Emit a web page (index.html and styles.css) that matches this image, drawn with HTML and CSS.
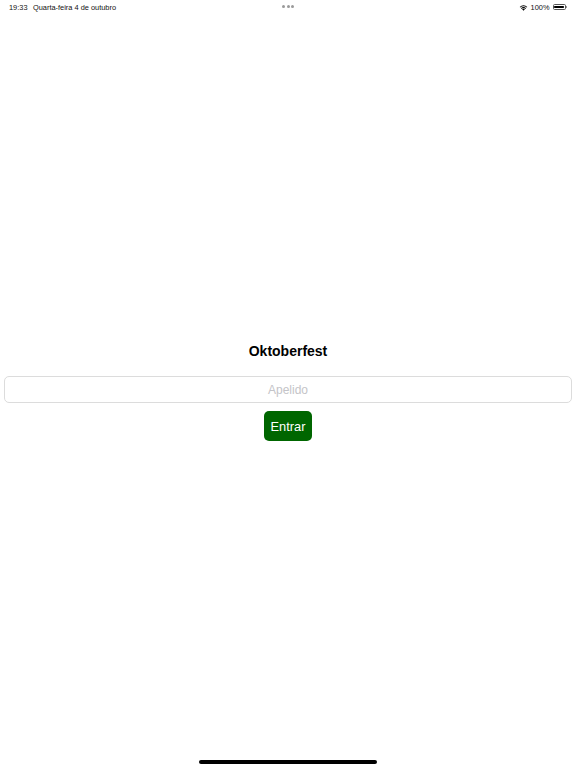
FILE: index.html
```
<!DOCTYPE html>
<html lang="pt">
<head>
<meta charset="utf-8">
<title>Oktoberfest</title>
<link rel="stylesheet" href="styles.css">
</head>
<body>
<div class="page">
  <header class="statusbar">
    <div class="sb-left">
      <span class="time">19:33</span>
      <span class="date">Quarta-feira 4 de outubro</span>
    </div>
    <div class="sb-center">
      <span class="dot"></span><span class="dot"></span><span class="dot"></span>
    </div>
    <div class="sb-right">
      <svg class="wifi" width="9" height="7" viewBox="0 0 18 14">
        <path d="M9 13.5 L6.2 10.6 A4 4 0 0 1 11.8 10.6 Z" fill="#000"/>
        <path d="M3.9 8.3 A7.3 7.3 0 0 1 14.1 8.3 L12.6 9.8 A5.2 5.2 0 0 0 5.4 9.8 Z" fill="#000"/>
        <path d="M1.4 5.8 A10.8 10.8 0 0 1 16.6 5.8 L15.2 7.2 A8.8 8.8 0 0 0 2.8 7.2 Z" fill="#000"/>
      </svg>
      <span class="pct">100%</span>
      <span class="battery"><span class="battery-fill"></span></span><span class="battery-nub"></span>
    </div>
  </header>
  <main class="main">
    <h1 class="title">Oktoberfest</h1>
    <input class="field" type="text" placeholder="Apelido">
    <button class="btn" type="button">Entrar</button>
  </main>
  <footer class="homebar-wrap"><span class="homebar"></span></footer>
</div>
</body>
</html>
```
FILE: styles.css
```
* { box-sizing: border-box; }
html, body { margin: 0; padding: 0; background: #fff; }
body { font-family: "Liberation Sans", Arial, sans-serif; color: #000; }

.page {
  width: 576px;
  height: 768px;
  display: flex;
  flex-direction: column;
  overflow: hidden;
}

.statusbar {
  height: 14px;
  display: flex;
  align-items: center;
  justify-content: space-between;
  padding: 0 9px 0 9px;
  font-size: 7.4px;
  color: #111;
  position: relative;
}
.sb-left { display: flex; gap: 5.5px; align-items: center; }
.time, .date, .pct { color: #111; }
.sb-center {
  position: absolute;
  left: 282px;
  top: 5px;
  display: flex;
  gap: 1.5px;
}
.dot { width: 3px; height: 3px; border-radius: 50%; background: #9a9a9a; display: block; }
.sb-right { display: flex; align-items: center; }
.wifi { margin-right: 3px; }
.pct { margin-right: 3px; }
.battery {
  width: 13px;
  height: 6px;
  border: 0.8px solid #555;
  border-radius: 1.6px;
  padding: 0.7px;
  display: flex;
}
.battery-fill { flex: 1; background: #000; border-radius: 0.8px; }
.battery-nub { width: 1px; height: 2.5px; background: #777; border-radius: 0 1px 1px 0; margin-left: 0.5px; }

.main {
  flex: 1;
  display: flex;
  flex-direction: column;
  align-items: center;
  padding-top: 328px;
}
.title {
  margin: 0 0 16px 0;
  height: 18px;
  line-height: 18px;
  font-size: 14px;
  font-weight: bold;
}
.field {
  width: 568px;
  height: 27px;
  border: 1px solid #dcdcdc;
  border-radius: 5px;
  text-align: center;
  font-family: inherit;
  font-size: 12px;
  color: #000;
  outline: none;
  padding: 0;
  margin: 0 0 8px 0;
  background: #fff;
}
.field::placeholder { color: #c4c4c8; }
.btn {
  width: 48px;
  height: 30px;
  background: #006600;
  color: #fff;
  border: none;
  border-radius: 5px;
  font-family: inherit;
  font-size: 12.8px;
  padding: 0;
}

.homebar-wrap {
  height: 12px;
  display: flex;
  justify-content: center;
  padding-top: 4px;
}
.homebar {
  display: block;
  width: 178px;
  height: 3.5px;
  background: #000;
  border-radius: 2px;
}
```
